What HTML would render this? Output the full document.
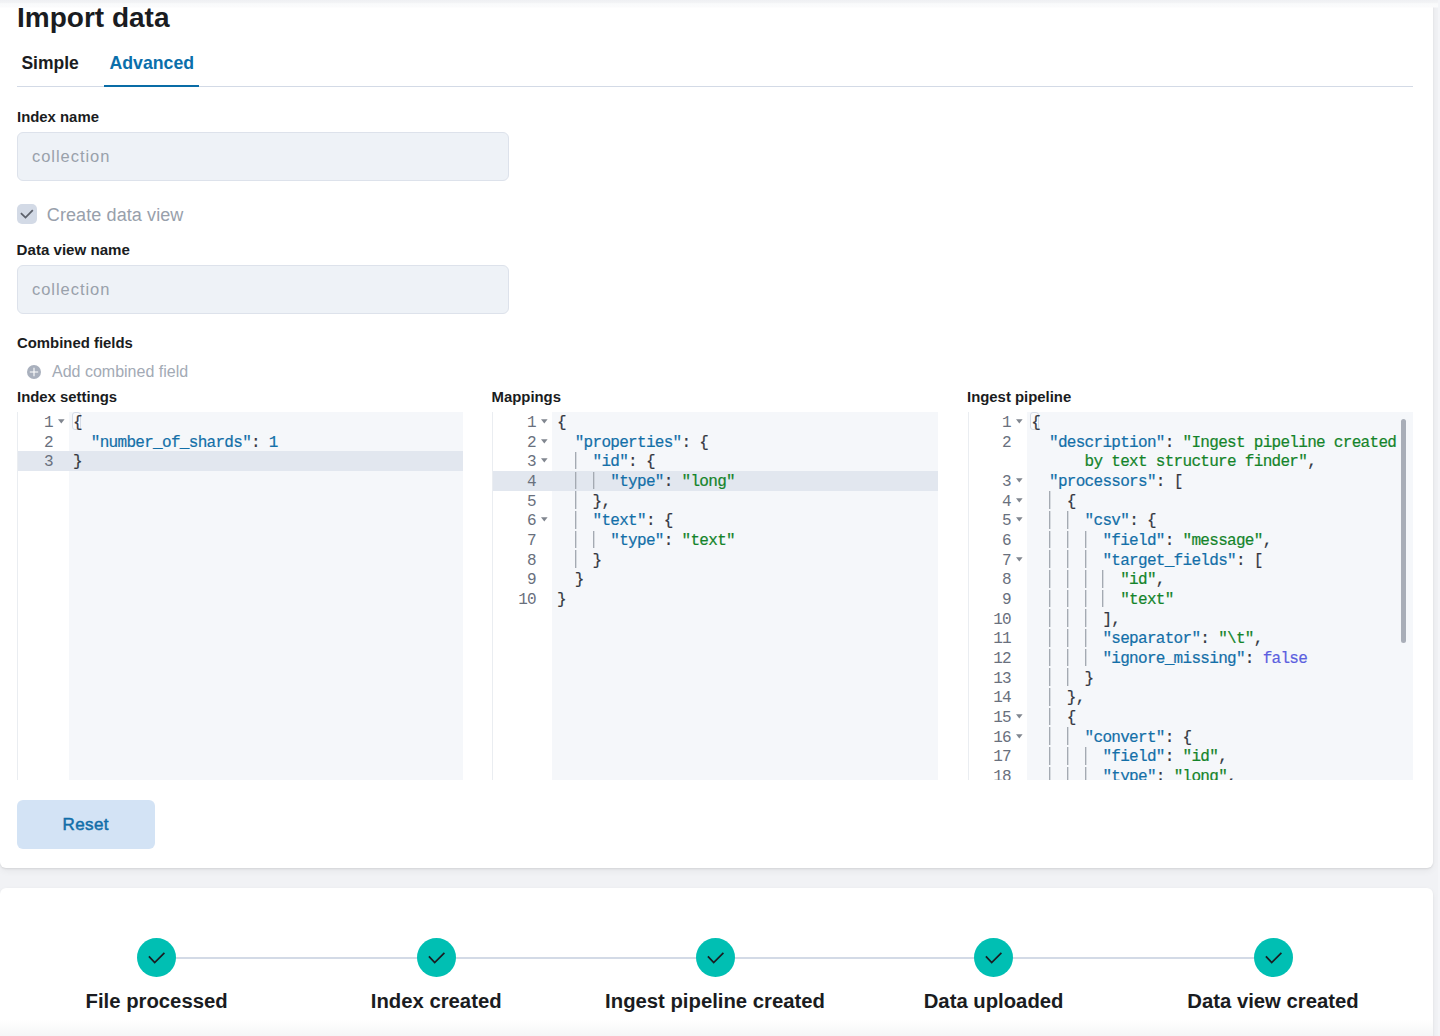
<!DOCTYPE html>
<html><head><meta charset="utf-8">
<style>
*{box-sizing:border-box;margin:0;padding:0}
html,body{width:1440px;height:1036px;overflow:hidden;background:#f1f2f5;font-family:"Liberation Sans",sans-serif;color:#1a1c21}
.abs{position:absolute}
.t{position:absolute;white-space:nowrap}
#topfade{position:absolute;left:0;top:0;width:1440px;height:8px;background:linear-gradient(#eff0f3 0,#f3f4f6 3px,#f9fafb 3.6px,#fbfbfc 7px,rgba(255,255,255,0) 8px)}
#p1{position:absolute;left:0px;top:-20px;width:1433px;height:888px;background:#fff;border-radius:6px;box-shadow:0 1px 2px rgba(0,0,0,.09),0 3px 7px rgba(0,0,0,.05)}
#p2{position:absolute;left:0px;top:888px;width:1433px;height:300px;background:#fff;border-radius:6px;box-shadow:0 1px 2px rgba(0,0,0,.08),0 2px 6px rgba(0,0,0,.04)}
.lbl{font-weight:700;font-size:14.9px;line-height:14.9px;color:#1a1c21}
.inp{position:absolute;left:17px;width:492px;height:49px;background:#eef2f7;border:1px solid #dde2eb;border-radius:6px}
.ph{font-size:16.5px;line-height:16.5px;color:#99a1ab;letter-spacing:0.95px}
.ed{position:absolute;overflow:hidden;font-family:"Liberation Mono",monospace;font-size:16px;letter-spacing:-0.7px}
.gut{position:absolute;left:0;top:0;height:100%;background:#fff;border-left:1px solid #eaedf1}
.code{position:absolute;top:0;height:100%;background:#f5f7fa}
.act{position:absolute;background:#e2e7ef}
.brk{position:absolute;border:1px solid #d5dce7;border-radius:3px;background:#f9fafc}
.ln{position:absolute;line-height:19.67px;color:#69707d;white-space:pre;margin-top:1.9px}
.fold{position:absolute}
.ig{position:absolute;width:1px;background:#a4aab2;box-shadow:1px 0 0 rgba(180,185,193,.45)}
.cl{position:absolute;line-height:19.67px;white-space:pre;color:#343741;margin-top:1.9px;-webkit-text-stroke:0.2px currentColor}
.sb{position:absolute;width:5px;background:#a9aeb8;border-radius:3px}
.st{font-size:20.3px;line-height:20.3px;font-weight:700;text-align:center;color:#1a1c21}
</style></head>
<body>
<div id="p1"></div>
<div id="p2"></div>
<div id="topfade"></div>
<div class="abs" style="left:1438px;top:0;width:2px;height:1036px;background:#f4f5f8"></div>
<div class="abs" style="left:0;top:1020px;width:1433px;height:16px;background:linear-gradient(rgba(246,247,248,0),rgba(244,245,246,.9))"></div>

<div class="t" style="left:17px;top:3.8px;font-size:28px;line-height:28px;font-weight:700;color:#1a1c21">Import data</div>
<div class="t" style="left:21.4px;top:54.9px;font-size:17.5px;line-height:17.5px;font-weight:700;color:#1a1c21">Simple</div>
<div class="t" style="left:109.5px;top:54.6px;font-size:17.7px;line-height:17.7px;font-weight:700;color:#0b6fab">Advanced</div>
<div class="abs" style="left:17px;top:86px;width:1396px;height:1px;background:#d3dae6"></div>
<div class="abs" style="left:104px;top:85px;width:95px;height:2px;background:#096ca6"></div>

<div class="t lbl" style="left:17px;top:109.9px">Index name</div>
<div class="inp" style="top:132px"></div>
<div class="t ph" style="left:32px;top:147.8px">collection</div>

<div class="abs" style="left:17px;top:204px;width:20px;height:20px;background:#d3dae6;border-radius:5px"></div>
<svg class="abs" style="left:17px;top:204px" width="20" height="20" viewBox="0 0 20 20"><path d="M3.9 9.2 L8.5 13.6 L15.8 6.2" fill="none" stroke="#5c616b" stroke-width="1.8"/></svg>
<div class="t" style="left:46.8px;top:205.9px;font-size:18px;line-height:18px;color:#98a0ab;letter-spacing:0.1px">Create data view</div>

<div class="t lbl" style="left:16.6px;top:242.6px;font-size:15.1px">Data view name</div>
<div class="inp" style="top:264.5px"></div>
<div class="t ph" style="left:32px;top:280.6px">collection</div>

<div class="t lbl" style="left:17px;top:335.8px">Combined fields</div>
<svg class="abs" style="left:27px;top:365px" width="14" height="14" viewBox="0 0 14 14"><circle cx="7" cy="7" r="7" fill="#a9b0bd"/><path d="M7 2.8V11.2M2.8 7H11.2" stroke="#fff" stroke-width="1.1"/></svg>
<div class="t" style="left:52px;top:364px;font-size:16px;line-height:16px;color:#a3aab5">Add combined field</div>

<div class="t lbl" style="left:17px;top:390px">Index settings</div>
<div class="t lbl" style="left:491.5px;top:390px">Mappings</div>
<div class="t lbl" style="left:967px;top:390px">Ingest pipeline</div>

<!-- EDITORS -->
<div class="ed" style="left:17px;top:412px;width:446px;height:368px">
<div class="gut" style="width:52px"></div>
<div class="code" style="left:52px;width:394px"></div>
<div class="act" style="top:39.34px;left:1px;width:445px;height:19.67px"></div>
<div class="brk" style="left:55.0px;top:-0.5px;width:8.9px;height:18.2px"></div>
<div class="ln" style="top:0.00px;right:410px">1</div>
<svg class="fold" style="left:41.2px;top:6.90px" width="7" height="5" viewBox="0 0 7 5"><path d="M0 0.3H6.6L3.3 4.5Z" fill="#80868f"/></svg>
<div class="cl" style="left:56px;top:0.00px">{</div>
<div class="ln" style="top:19.67px;right:410px">2</div>
<div class="cl" style="left:56px;top:19.67px">  <span style="color:#136fa8">&quot;number_of_shards&quot;</span>: <span style="color:#136fa8">1</span></div>
<div class="ln" style="top:39.34px;right:410px">3</div>
<div class="cl" style="left:56px;top:39.34px">}</div>
</div>
<div class="ed" style="left:492px;top:412px;width:446px;height:368px">
<div class="gut" style="width:60px"></div>
<div class="code" style="left:60px;width:386px"></div>
<div class="act" style="top:59.01px;left:1px;width:445px;height:19.67px"></div>
<div class="ln" style="top:0.00px;right:402px">1</div>
<svg class="fold" style="left:49.2px;top:6.90px" width="7" height="5" viewBox="0 0 7 5"><path d="M0 0.3H6.6L3.3 4.5Z" fill="#80868f"/></svg>
<div class="cl" style="left:64.89999999999998px;top:0.00px">{</div>
<div class="ln" style="top:19.67px;right:402px">2</div>
<svg class="fold" style="left:49.2px;top:26.57px" width="7" height="5" viewBox="0 0 7 5"><path d="M0 0.3H6.6L3.3 4.5Z" fill="#80868f"/></svg>
<div class="cl" style="left:64.89999999999998px;top:19.67px">  <span style="color:#136fa8">&quot;properties&quot;</span>: {</div>
<div class="ln" style="top:39.34px;right:402px">3</div>
<svg class="fold" style="left:49.2px;top:46.24px" width="7" height="5" viewBox="0 0 7 5"><path d="M0 0.3H6.6L3.3 4.5Z" fill="#80868f"/></svg>
<div class="ig" style="left:82.7px;top:39.84px;height:17.67px"></div>
<div class="cl" style="left:64.89999999999998px;top:39.34px">    <span style="color:#136fa8">&quot;id&quot;</span>: {</div>
<div class="ln" style="top:59.01px;right:402px">4</div>
<div class="ig" style="left:82.7px;top:59.51px;height:17.67px"></div>
<div class="ig" style="left:100.5px;top:59.51px;height:17.67px"></div>
<div class="cl" style="left:64.89999999999998px;top:59.01px">      <span style="color:#136fa8">&quot;type&quot;</span>: <span style="color:#14842a">&quot;long&quot;</span></div>
<div class="ln" style="top:78.68px;right:402px">5</div>
<div class="ig" style="left:82.7px;top:79.18px;height:17.67px"></div>
<div class="cl" style="left:64.89999999999998px;top:78.68px">    },</div>
<div class="ln" style="top:98.35px;right:402px">6</div>
<svg class="fold" style="left:49.2px;top:105.25px" width="7" height="5" viewBox="0 0 7 5"><path d="M0 0.3H6.6L3.3 4.5Z" fill="#80868f"/></svg>
<div class="ig" style="left:82.7px;top:98.85px;height:17.67px"></div>
<div class="cl" style="left:64.89999999999998px;top:98.35px">    <span style="color:#136fa8">&quot;text&quot;</span>: {</div>
<div class="ln" style="top:118.02px;right:402px">7</div>
<div class="ig" style="left:82.7px;top:118.52px;height:17.67px"></div>
<div class="ig" style="left:100.5px;top:118.52px;height:17.67px"></div>
<div class="cl" style="left:64.89999999999998px;top:118.02px">      <span style="color:#136fa8">&quot;type&quot;</span>: <span style="color:#14842a">&quot;text&quot;</span></div>
<div class="ln" style="top:137.69px;right:402px">8</div>
<div class="ig" style="left:82.7px;top:138.19px;height:17.67px"></div>
<div class="cl" style="left:64.89999999999998px;top:137.69px">    }</div>
<div class="ln" style="top:157.36px;right:402px">9</div>
<div class="cl" style="left:64.89999999999998px;top:157.36px">  }</div>
<div class="ln" style="top:177.03px;right:402px">10</div>
<div class="cl" style="left:64.89999999999998px;top:177.03px">}</div>
</div>
<div class="ed" style="left:968px;top:412px;width:445px;height:368px">
<div class="gut" style="width:59px"></div>
<div class="code" style="left:59px;width:386px"></div>
<div class="brk" style="left:62.2px;top:-0.5px;width:8.9px;height:18.2px"></div>
<div class="ln" style="top:0.00px;right:402px">1</div>
<svg class="fold" style="left:48.2px;top:6.90px" width="7" height="5" viewBox="0 0 7 5"><path d="M0 0.3H6.6L3.3 4.5Z" fill="#80868f"/></svg>
<div class="cl" style="left:63.200000000000045px;top:0.00px">{</div>
<div class="ln" style="top:19.67px;right:402px">2</div>
<div class="cl" style="left:63.200000000000045px;top:19.67px">  <span style="color:#136fa8">&quot;description&quot;</span>: <span style="color:#14842a">&quot;Ingest pipeline created</span></div>
<div class="cl" style="left:63.200000000000045px;top:39.34px"><span style="color:#14842a">      by text structure finder&quot;</span>,</div>
<div class="ln" style="top:59.01px;right:402px">3</div>
<svg class="fold" style="left:48.2px;top:65.91px" width="7" height="5" viewBox="0 0 7 5"><path d="M0 0.3H6.6L3.3 4.5Z" fill="#80868f"/></svg>
<div class="cl" style="left:63.200000000000045px;top:59.01px">  <span style="color:#136fa8">&quot;processors&quot;</span>: [</div>
<div class="ln" style="top:78.68px;right:402px">4</div>
<svg class="fold" style="left:48.2px;top:85.58px" width="7" height="5" viewBox="0 0 7 5"><path d="M0 0.3H6.6L3.3 4.5Z" fill="#80868f"/></svg>
<div class="ig" style="left:81.0px;top:79.18px;height:17.67px"></div>
<div class="cl" style="left:63.200000000000045px;top:78.68px">    {</div>
<div class="ln" style="top:98.35px;right:402px">5</div>
<svg class="fold" style="left:48.2px;top:105.25px" width="7" height="5" viewBox="0 0 7 5"><path d="M0 0.3H6.6L3.3 4.5Z" fill="#80868f"/></svg>
<div class="ig" style="left:81.0px;top:98.85px;height:17.67px"></div>
<div class="ig" style="left:98.8px;top:98.85px;height:17.67px"></div>
<div class="cl" style="left:63.200000000000045px;top:98.35px">      <span style="color:#136fa8">&quot;csv&quot;</span>: {</div>
<div class="ln" style="top:118.02px;right:402px">6</div>
<div class="ig" style="left:81.0px;top:118.52px;height:17.67px"></div>
<div class="ig" style="left:98.8px;top:118.52px;height:17.67px"></div>
<div class="ig" style="left:116.6px;top:118.52px;height:17.67px"></div>
<div class="cl" style="left:63.200000000000045px;top:118.02px">        <span style="color:#136fa8">&quot;field&quot;</span>: <span style="color:#14842a">&quot;message&quot;</span>,</div>
<div class="ln" style="top:137.69px;right:402px">7</div>
<svg class="fold" style="left:48.2px;top:144.59px" width="7" height="5" viewBox="0 0 7 5"><path d="M0 0.3H6.6L3.3 4.5Z" fill="#80868f"/></svg>
<div class="ig" style="left:81.0px;top:138.19px;height:17.67px"></div>
<div class="ig" style="left:98.8px;top:138.19px;height:17.67px"></div>
<div class="ig" style="left:116.6px;top:138.19px;height:17.67px"></div>
<div class="cl" style="left:63.200000000000045px;top:137.69px">        <span style="color:#136fa8">&quot;target_fields&quot;</span>: [</div>
<div class="ln" style="top:157.36px;right:402px">8</div>
<div class="ig" style="left:81.0px;top:157.86px;height:17.67px"></div>
<div class="ig" style="left:98.8px;top:157.86px;height:17.67px"></div>
<div class="ig" style="left:116.6px;top:157.86px;height:17.67px"></div>
<div class="ig" style="left:134.4px;top:157.86px;height:17.67px"></div>
<div class="cl" style="left:63.200000000000045px;top:157.36px">          <span style="color:#14842a">&quot;id&quot;</span>,</div>
<div class="ln" style="top:177.03px;right:402px">9</div>
<div class="ig" style="left:81.0px;top:177.53px;height:17.67px"></div>
<div class="ig" style="left:98.8px;top:177.53px;height:17.67px"></div>
<div class="ig" style="left:116.6px;top:177.53px;height:17.67px"></div>
<div class="ig" style="left:134.4px;top:177.53px;height:17.67px"></div>
<div class="cl" style="left:63.200000000000045px;top:177.03px">          <span style="color:#14842a">&quot;text&quot;</span></div>
<div class="ln" style="top:196.70px;right:402px">10</div>
<div class="ig" style="left:81.0px;top:197.20px;height:17.67px"></div>
<div class="ig" style="left:98.8px;top:197.20px;height:17.67px"></div>
<div class="ig" style="left:116.6px;top:197.20px;height:17.67px"></div>
<div class="cl" style="left:63.200000000000045px;top:196.70px">        ],</div>
<div class="ln" style="top:216.37px;right:402px">11</div>
<div class="ig" style="left:81.0px;top:216.87px;height:17.67px"></div>
<div class="ig" style="left:98.8px;top:216.87px;height:17.67px"></div>
<div class="ig" style="left:116.6px;top:216.87px;height:17.67px"></div>
<div class="cl" style="left:63.200000000000045px;top:216.37px">        <span style="color:#136fa8">&quot;separator&quot;</span>: <span style="color:#14842a">&quot;\t&quot;</span>,</div>
<div class="ln" style="top:236.04px;right:402px">12</div>
<div class="ig" style="left:81.0px;top:236.54px;height:17.67px"></div>
<div class="ig" style="left:98.8px;top:236.54px;height:17.67px"></div>
<div class="ig" style="left:116.6px;top:236.54px;height:17.67px"></div>
<div class="cl" style="left:63.200000000000045px;top:236.04px">        <span style="color:#136fa8">&quot;ignore_missing&quot;</span>: <span style="color:#5b5fe0">false</span></div>
<div class="ln" style="top:255.71px;right:402px">13</div>
<div class="ig" style="left:81.0px;top:256.21px;height:17.67px"></div>
<div class="ig" style="left:98.8px;top:256.21px;height:17.67px"></div>
<div class="cl" style="left:63.200000000000045px;top:255.71px">      }</div>
<div class="ln" style="top:275.38px;right:402px">14</div>
<div class="ig" style="left:81.0px;top:275.88px;height:17.67px"></div>
<div class="cl" style="left:63.200000000000045px;top:275.38px">    },</div>
<div class="ln" style="top:295.05px;right:402px">15</div>
<svg class="fold" style="left:48.2px;top:301.95px" width="7" height="5" viewBox="0 0 7 5"><path d="M0 0.3H6.6L3.3 4.5Z" fill="#80868f"/></svg>
<div class="ig" style="left:81.0px;top:295.55px;height:17.67px"></div>
<div class="cl" style="left:63.200000000000045px;top:295.05px">    {</div>
<div class="ln" style="top:314.72px;right:402px">16</div>
<svg class="fold" style="left:48.2px;top:321.62px" width="7" height="5" viewBox="0 0 7 5"><path d="M0 0.3H6.6L3.3 4.5Z" fill="#80868f"/></svg>
<div class="ig" style="left:81.0px;top:315.22px;height:17.67px"></div>
<div class="ig" style="left:98.8px;top:315.22px;height:17.67px"></div>
<div class="cl" style="left:63.200000000000045px;top:314.72px">      <span style="color:#136fa8">&quot;convert&quot;</span>: {</div>
<div class="ln" style="top:334.39px;right:402px">17</div>
<div class="ig" style="left:81.0px;top:334.89px;height:17.67px"></div>
<div class="ig" style="left:98.8px;top:334.89px;height:17.67px"></div>
<div class="ig" style="left:116.6px;top:334.89px;height:17.67px"></div>
<div class="cl" style="left:63.200000000000045px;top:334.39px">        <span style="color:#136fa8">&quot;field&quot;</span>: <span style="color:#14842a">&quot;id&quot;</span>,</div>
<div class="ln" style="top:354.06px;right:402px">18</div>
<div class="ig" style="left:81.0px;top:354.56px;height:17.67px"></div>
<div class="ig" style="left:98.8px;top:354.56px;height:17.67px"></div>
<div class="ig" style="left:116.6px;top:354.56px;height:17.67px"></div>
<div class="cl" style="left:63.200000000000045px;top:354.06px">        <span style="color:#136fa8">&quot;type&quot;</span>: <span style="color:#14842a">&quot;long&quot;</span>,</div>
<div class="sb" style="left:432.5px;top:7px;height:223.5px"></div>
</div>

<div class="abs" style="left:17px;top:800px;width:138px;height:48.5px;background:#d3e3f5;border-radius:6px"></div>
<div class="t" style="left:62.5px;top:816px;font-size:17px;line-height:17px;color:#116ea9;-webkit-text-stroke:0.5px #116ea9;letter-spacing:0.4px">Reset</div>

<!-- STEPS -->
<div class="abs" style="left:156.6px;top:957px;width:1116.4px;height:2px;background:#d3dae6"></div>
<svg class="abs" style="left:137.1px;top:937.5px" width="39" height="39" viewBox="0 0 39 39"><circle cx="19.5" cy="19.5" r="19.5" fill="#00bfb3"/><path d="M11.9 18.3 L17.7 24.5 L27.4 14.9" fill="none" stroke="#1a1c21" stroke-width="1.75"/></svg>
<div class="t st" style="left:6.6px;width:300px;top:990.8px">File processed</div>
<svg class="abs" style="left:416.7px;top:937.5px" width="39" height="39" viewBox="0 0 39 39"><circle cx="19.5" cy="19.5" r="19.5" fill="#00bfb3"/><path d="M11.9 18.3 L17.7 24.5 L27.4 14.9" fill="none" stroke="#1a1c21" stroke-width="1.75"/></svg>
<div class="t st" style="left:286.2px;width:300px;top:990.8px">Index created</div>
<svg class="abs" style="left:695.5px;top:937.5px" width="39" height="39" viewBox="0 0 39 39"><circle cx="19.5" cy="19.5" r="19.5" fill="#00bfb3"/><path d="M11.9 18.3 L17.7 24.5 L27.4 14.9" fill="none" stroke="#1a1c21" stroke-width="1.75"/></svg>
<div class="t st" style="left:565.0px;width:300px;top:990.8px">Ingest pipeline created</div>
<svg class="abs" style="left:974.1px;top:937.5px" width="39" height="39" viewBox="0 0 39 39"><circle cx="19.5" cy="19.5" r="19.5" fill="#00bfb3"/><path d="M11.9 18.3 L17.7 24.5 L27.4 14.9" fill="none" stroke="#1a1c21" stroke-width="1.75"/></svg>
<div class="t st" style="left:843.6px;width:300px;top:990.8px">Data uploaded</div>
<svg class="abs" style="left:1253.5px;top:937.5px" width="39" height="39" viewBox="0 0 39 39"><circle cx="19.5" cy="19.5" r="19.5" fill="#00bfb3"/><path d="M11.9 18.3 L17.7 24.5 L27.4 14.9" fill="none" stroke="#1a1c21" stroke-width="1.75"/></svg>
<div class="t st" style="left:1123.0px;width:300px;top:990.8px">Data view created</div>
</body></html>
